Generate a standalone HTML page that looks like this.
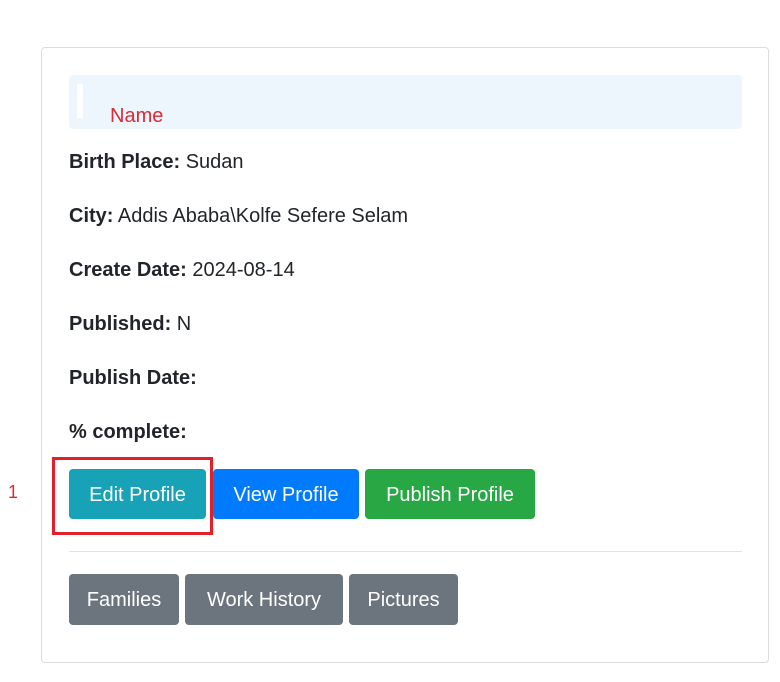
<!DOCTYPE html>
<html><head><style>
body{margin:0;width:780px;height:682px;background:#fff;font-family:"Liberation Sans",sans-serif;color:#212529;position:relative;overflow:hidden}
.card{position:absolute;left:41px;top:47px;width:726px;height:614px;border:1px solid #dcdcdc;border-radius:4px}
.name{position:absolute;left:69px;top:75px;width:673px;height:54px;background:#eef6fd;border-radius:4px}
.bar{position:absolute;left:8px;top:9px;width:6px;height:34px;background:#fff}
.nm{position:absolute;left:41px;top:30px;color:#dc2a35;font-size:20px}
.line{position:absolute;left:69px;font-size:20px;white-space:nowrap}
.line b{font-weight:bold}
.btn{position:absolute;height:50px;line-height:53px;color:#fff;font-size:20px;text-align:center;border-radius:4px}
.red{position:absolute;left:52px;top:457px;width:155px;height:72px;border:3px solid #e0202a}
</style></head><body>
<div class="card"></div>
<div class="name"><div class="bar"></div><div class="nm">Name</div></div>
<div class="line" style="top:151px"><b>Birth Place:</b> Sudan</div>
<div class="line" style="top:205px"><b>City:</b> Addis Ababa\Kolfe Sefere Selam</div>
<div class="line" style="top:259px"><b>Create Date:</b> 2024-08-14</div>
<div class="line" style="top:313px"><b>Published:</b> N</div>
<div class="line" style="top:367px"><b>Publish Date:</b></div>
<div class="line" style="top:421px"><b>% complete:</b></div>
<div style="position:absolute;left:8px;top:482px;color:#dc2a35;font-size:18px">1</div>
<div class="btn" style="left:69px;top:469px;width:137px;background:#17a2b8">Edit Profile</div>
<div class="btn" style="left:213px;top:469px;width:146px;background:#007bff">View Profile</div>
<div class="btn" style="left:365px;top:469px;width:170px;background:#28a745">Publish Profile</div>
<div class="red"></div>
<div style="position:absolute;left:69px;top:551px;width:673px;height:1px;background:#e2e2e2"></div>
<div class="btn" style="left:69px;top:574px;width:110px;height:51px;background:#6c757d">Families</div>
<div class="btn" style="left:185px;top:574px;width:158px;height:51px;background:#6c757d">Work History</div>
<div class="btn" style="left:349px;top:574px;width:109px;height:51px;background:#6c757d">Pictures</div>
</body></html>
